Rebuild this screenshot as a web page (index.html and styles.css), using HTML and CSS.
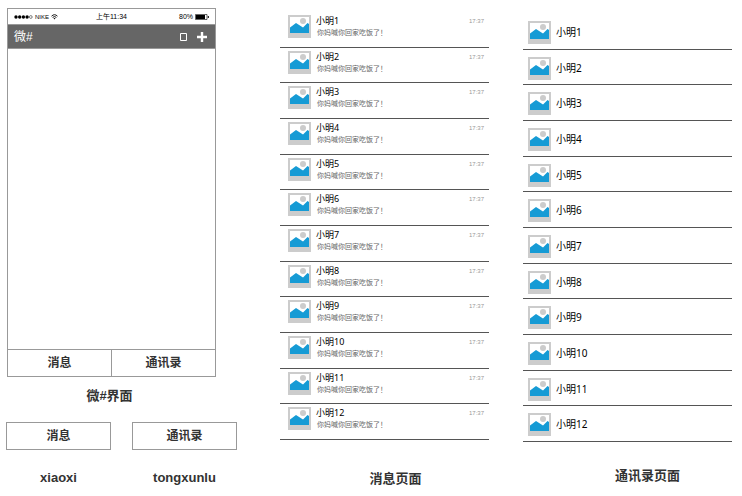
FILE: index.html
```html
<!DOCTYPE html>
<html lang="zh-CN">
<head>
<meta charset="utf-8">
<title>微#</title>
<link rel="stylesheet" href="styles.css">
</head>
<body>
<svg class="defs" aria-hidden="true">
  <symbol id="photo" viewBox="0 0 23 23">
    <path fill="#ccc" d="M0 0h23v23H0z"/>
    <path fill="#fff" d="M2 2h19v16H2z"/>
    <circle cx="15" cy="6" r="3" fill="#ccc"/>
    <path fill="#169bd5" d="M2 12.500L8 8l7 4.500 4.500-4.500L21 9v9H2z"/>
  </symbol>
</svg>
<main class="board">
  <section class="home">
    <div class="phone">
      <div class="status">
        <span class="carrier">
          <svg class="signal" viewBox="0 0 19 4" aria-hidden="true"><circle cx="2" cy="2" r="1.700"/><circle cx="5.700" cy="2" r="1.700"/><circle cx="9.400" cy="2" r="1.700"/><circle cx="13.100" cy="2" r="1.700"/><circle cx="16.800" cy="2" r="1.400" fill="none" stroke="#000" stroke-width=".5"/></svg>
          <span class="network">NIKE</span>
          <svg class="wifi" viewBox="0 0 7 6" aria-hidden="true"><path d="M.5 2.200Q3.500-.8 6.500 2.200M1.600 3.400q1.900-1.600 3.800 0" fill="none" stroke="#000" stroke-width=".9"/><path d="M2.500 4.300q1-.8 2 0l-1 1.300z"/></svg>
        </span>
        <span>上午11:34</span>
        <span class="power">80%
          <svg class="battery" viewBox="0 0 14 6" aria-hidden="true"><path d="M.5.500h11.500v5H.5z" fill="none" stroke="#000" stroke-width=".6"/><path d="M1 1h9v4H1zM12.800 2h1v2h-1z"/></svg>
        </span>
      </div>
      <header class="bar">
        <h1>微#</h1>
        <button class="icon" aria-label="搜索"><svg class="glyph" viewBox="0 0 7 8"><path d="M.5.500h6v7h-6z" fill="none" stroke="#fff"/></svg></button>
        <button class="icon" aria-label="添加"><svg class="plus" viewBox="0 0 10 10"><path d="M3.800 0h2.400v3.800H10v2.400H6.200V10H3.800V6.200H0V3.800h3.800z" fill="#fff"/></svg></button>
      </header>
      <div class="screen"></div>
      <nav class="tabs"><button>消息</button><button>通讯录</button></nav>
    </div>
    <h2 class="caption">微#界面</h2>
    <div class="states">
      <figure><button>消息</button><figcaption>xiaoxi</figcaption></figure>
      <figure><button>通讯录</button><figcaption>tongxunlu</figcaption></figure>
    </div>
  </section>
  <section class="messages">
    <ul class="list" id="messages"></ul>
    <h2>消息页面</h2>
  </section>
  <section class="contacts">
    <ul class="list" id="contacts"></ul>
    <h2>通讯录页面</h2>
  </section>
</main>
<script src="lists.js"></script>
</body>
</html>
```
FILE: lists.js
```js
const photo = '<svg class="photo" aria-hidden="true"><use href="#photo"/></svg>';
const names = Array.from({ length: 12 }, (_, i) => `小明${i + 1}`);

document.getElementById('messages').innerHTML = names.map(name =>
  `<li>${photo}<div class="text"><strong>${name}</strong><p>你妈喊你回家吃饭了！</p></div><time>17:37</time></li>`
).join('');

document.getElementById('contacts').innerHTML = names.map(name =>
  `<li>${photo}<span>${name}</span></li>`
).join('');
```
FILE: styles.css
```css
* { box-sizing: border-box; margin: 0; padding: 0; }

body {
  background: #fff;
  color: #333;
  font-family: "Liberation Sans", "Noto Sans CJK SC", sans-serif;
}

button {
  background: #fff;
  border: 1px solid #999;
  color: #333;
  font: bold 12px/16px "Liberation Sans", "Noto Sans CJK SC", sans-serif;
}

h2 { font-size: 13px; line-height: 20px; text-align: center; }
svg { display: block; flex: none; }
.defs { position: absolute; width: 0; height: 0; }

.board {
  display: grid;
  grid-template-columns: 240fr 209fr 209fr;
  gap: 34px;
  padding: 0 10px 0 6px;
}

.home { padding: 8px 9px 0 0; }
.phone { margin: 0 21px 0 1px; border: 1px solid #999; }

.status {
  display: grid;
  grid-template-columns: 1fr auto 1fr;
  align-items: center;
  height: 15px;
  padding: 0 6px;
  color: #000;
  font-size: 7px;
  line-height: 10px;
}
.carrier, .power { display: flex; align-items: center; gap: 2px; }
.power { justify-content: flex-end; }
.network { font-size: 6px; }
.signal { width: 19px; height: 4px; }
.wifi { width: 7px; height: 6px; }
.battery { width: 14px; height: 6px; }

.bar {
  display: flex;
  align-items: center;
  gap: 10px;
  height: 25px;
  padding: 0 8px 0 6px;
  border: solid #999;
  border-width: 1px 0;
  background: #666;
  color: #fff;
}
.bar h1 { margin-right: auto; font-size: 12px; font-weight: normal; line-height: 16px; }
.icon { background: none; border: 0; }
.glyph { width: 7px; height: 8px; }
.plus { width: 10px; height: 10px; }

.screen { height: 300px; }
.tabs { display: flex; border-top: 1px solid #999; }
.tabs button { flex: 1; height: 26px; border-width: 0; }
.tabs button + button { border-left-width: 1px; }
.caption { margin-top: 9px; padding-right: 24px; }

.states { display: flex; gap: 21px; margin-top: 16px; }
.states figure { flex: 1; }
.states button { display: block; width: 100%; height: 28px; }
.states figcaption {
  margin-top: 18px;
  font-size: 13px;
  font-weight: bold;
  line-height: 20px;
  text-align: center;
}

.list {
  display: grid;
  grid-template-rows: repeat(12, 1fr);
  height: 428px;
  list-style: none;
  color: #000;
  font-family: "Noto Sans", "Noto Sans CJK SC", sans-serif;
}
.list li { display: flex; gap: 5px; border-bottom: 1px solid #555; }
.photo { width: 23px; height: 23px; }

.messages { padding-top: 12px; }
.messages li { padding: 3px 5px 0 8px; }
.messages strong { display: block; font-size: 9px; font-weight: normal; line-height: 12px; }
.messages p { padding-left: 1px; color: #666; font-size: 7px; line-height: 11px; }
.messages time {
  margin-left: auto;
  color: #999;
  font-family: "Liberation Sans", sans-serif;
  font-size: 6px;
  line-height: 12px;
}
.messages h2 { margin: 29px 0 0 22px; }

.contacts { padding-top: 14px; }
.contacts li { padding: 7px 5px 0 5px; }
.contacts span { font-size: 10px; line-height: 23px; }
.contacts h2 { margin: 24px 0 0 40px; }
```
